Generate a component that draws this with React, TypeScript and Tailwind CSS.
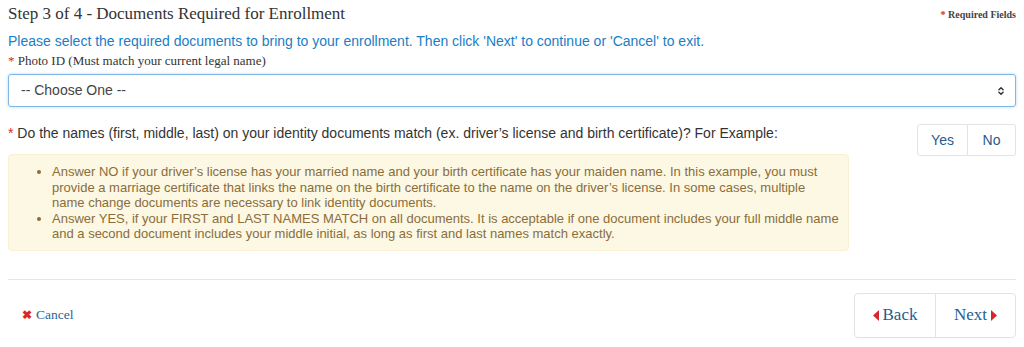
import { ChevronsUpDown } from "lucide-react";

const serif = "font-['Liberation_Serif',serif]";
const sans = "font-['Liberation_Sans',Arial,sans-serif]";

function Triangle({ dir }: { dir: "left" | "right" }) {
  return (
    <svg width="6" height="11" viewBox="0 0 6 11" className="inline-block">
      {dir === "left" ? <polygon points="6,0 6,11 0,5.5" fill="#d9262e" /> : <polygon points="0,0 0,11 6,5.5" fill="#d9262e" />}
    </svg>
  );
}

export default function App() {
  return (
    <div className={`w-[1024px] h-[347px] bg-white px-2 ${sans}`}>
      <div className="flex items-start justify-between pt-[4px]">
        <h1 className={`${serif} text-[17px] leading-[20px] text-[#333]`}>Step 3 of 4 - Documents Required for Enrollment</h1>
        <div className={`${serif} mt-[3px] text-[10px] font-bold text-[#444]`}>
          <span className="text-[#d9262e]">*</span> Required Fields
        </div>
      </div>

      <p className="mt-[8px] text-[14px] leading-[18px] text-[#1b7dc4]">
        Please select the required documents to bring to your enrollment. Then click 'Next' to continue or 'Cancel' to exit.
      </p>

      <div className={`${serif} mt-[3px] text-[13px] leading-[16px] text-[#333]`}>
        <span className="text-[#d9262e]">*</span> Photo ID (Must match your current legal name)
      </div>

      <div className="mt-[5px] flex h-[33px] items-center justify-between rounded-[3px] border border-[#7fb6e8] px-[12px] shadow-[0_0_3px_rgba(102,175,233,0.5)]">
        <span className="text-[14px] text-[#444]">-- Choose One --</span>
        <ChevronsUpDown size={10} strokeWidth={3.5} className="mr-[-3px] text-[#333]" />
      </div>

      <div className="mt-[17px] flex items-start justify-between">
        <div className="text-[14px] leading-[18px] text-[#333]">
          <span className="text-[#d9262e]">*</span> Do the names (first, middle, last) on your identity documents match (ex. driver’s license and birth certificate)? For Example:
        </div>
        <div className="flex h-[32px] rounded-[3px] border border-[#e3e3e3] text-[14px] text-[#1f5d8f]">
          <button className="w-[50px] border-r border-[#e3e3e3]">Yes</button>
          <button className="w-[47px]">No</button>
        </div>
      </div>

      <div className="mt-[-2px] w-[841px] rounded-[4px] border border-[#faf0d2] bg-[#fcf8e3] pb-[8px] pt-[9px] text-[13px] leading-[15.5px] text-[#8a6d3b]">
        <ul className="list-disc pl-[43px]">
          <li>
            Answer NO if your driver’s license has your married name and your birth certificate has your maiden name. In this example, you must provide a marriage certificate that links the name on the birth certificate to the name on the driver’s license. In some cases, multiple name&nbsp;change documents are necessary to link identity documents.
          </li>
          <li>
            Answer YES, if your FIRST and LAST NAMES MATCH on all documents. It is acceptable if one document includes your full middle name and a second document includes your middle initial, as long as first and last names match exactly.
          </li>
        </ul>
      </div>

      <hr className="mt-[28px] border-t border-[#e5e5e5]" />

      <div className="mt-[13px] flex items-center justify-between">
        <a className={`${serif} ml-[14px] flex items-center gap-[4px] text-[13.5px] text-[#2a6496]`}>
          <span className="text-[12px] font-bold text-[#d9262e]">✖</span>Cancel
        </a>
        <div className={`${serif} flex h-[45px] rounded-[4px] border border-[#e3e3e3] text-[17px] text-[#1f5d8f]`}>
          <button className="flex w-[81px] items-center justify-center gap-[4px] border-r border-[#e3e3e3]">
            <Triangle dir="left" />
            Back
          </button>
          <button className="flex w-[79px] items-center justify-center gap-[4px]">
            Next
            <Triangle dir="right" />
          </button>
        </div>
      </div>
    </div>
  );
}
